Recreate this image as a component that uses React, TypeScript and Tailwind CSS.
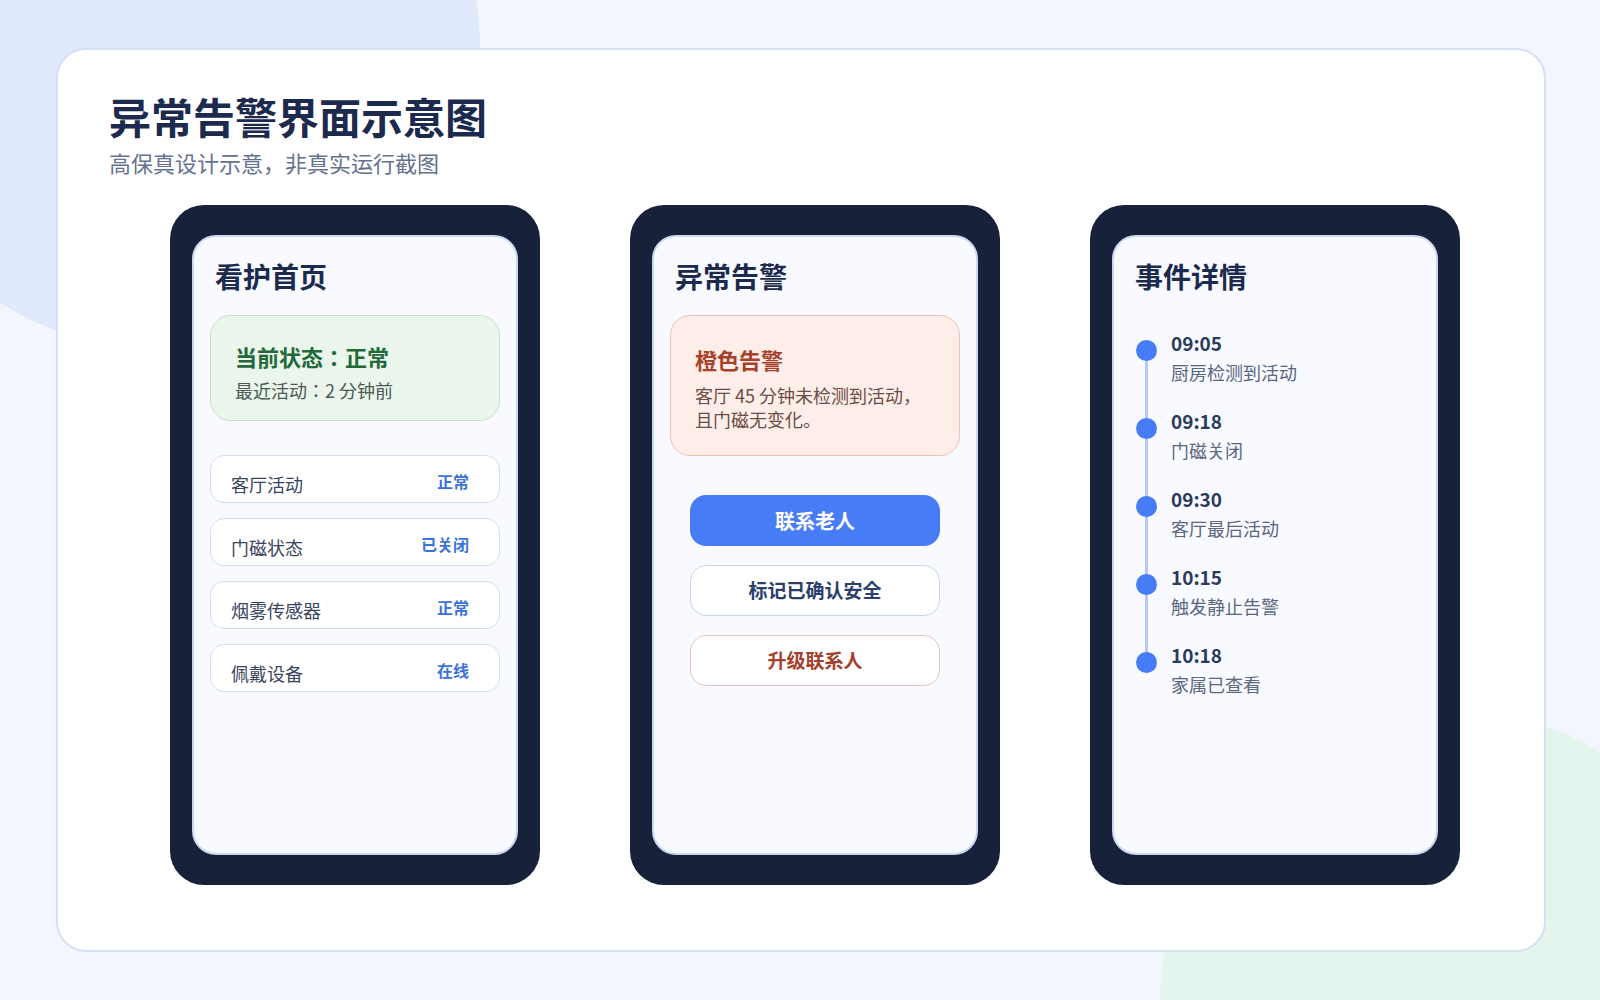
import React from "react";

function Phone({ children }: { children: React.ReactNode }) {
  return (
    <div className="w-[370px] h-[680px] shrink-0 rounded-[34px] bg-[#18213a] px-[22px] py-[30px]">
      <div className="h-full rounded-[24px] border-2 border-[#cad7ef] bg-[#f8faff] px-[16px] pt-[21px]">
        {children}
      </div>
    </div>
  );
}

function ScreenTitle({ text }: { text: string }) {
  return (
    <div className="pl-[5px] text-[28px] leading-[36px] font-bold text-[#1c2a4e]">{text}</div>
  );
}

const rows = [
  { label: "客厅活动", status: "正常" },
  { label: "门磁状态", status: "已关闭" },
  { label: "烟雾传感器", status: "正常" },
  { label: "佩戴设备", status: "在线" },
];

const events = [
  { time: "09:05", text: "厨房检测到活动" },
  { time: "09:18", text: "门磁关闭" },
  { time: "09:30", text: "客厅最后活动" },
  { time: "10:15", text: "触发静止告警" },
  { time: "10:18", text: "家属已查看" },
];

export default function App() {
  return (
    <div className="relative w-[1600px] h-[1000px] overflow-hidden bg-[#f3f6fd] pl-[56px] pt-[48px] font-['Noto_Sans_CJK_JP','Noto_Sans_CJK_SC',sans-serif]">
      <div className="absolute left-[-140px] top-[-255px] w-[620px] h-[605px] rounded-full bg-[#dfe9fb]" />
      <div className="absolute left-[1160px] top-[710px] w-[580px] h-[580px] rounded-full bg-[#e4f5ee]" />

      <div className="relative w-[1490px] h-[904px] rounded-[30px] border-2 border-[#d5e0f3] bg-white pl-[51px] pt-[42px]">
        <div className="text-[42px] leading-[48px] font-bold text-[#1c2a4e]">异常告警界面示意图</div>
        <div className="mt-[7px] text-[22px] leading-[30px] text-[#64728f]">高保真设计示意，非真实运行截图</div>

        <div className="mt-[28px] ml-[61px] flex gap-[90px]">
          {/* Phone 1 */}
          <Phone>
            <ScreenTitle text="看护首页" />
            <div className="mt-[21px] rounded-[20px] border border-[#c6e4c9] bg-[#eaf5ec] px-[24px] pt-[25px] pb-[18px]">
              <div className="text-[22px] leading-[30px] font-bold text-[#23693a]">当前状态：正常</div>
              <div className="mt-[7px] text-[18px] leading-[24px] text-[#4b5a52]">最近活动：2 分钟前</div>
            </div>
            <div className="mt-[34px] flex flex-col gap-[15px]">
              {rows.map((r) => (
                <div
                  key={r.label}
                  className="h-[48px] rounded-[14px] border border-[#d3def1] bg-white pl-[20px] pr-[30px] flex items-center justify-between"
                >
                  <span className="pt-[10px] text-[18px] leading-[24px] text-[#39445e]">{r.label}</span>
                  <span className="pt-[4px] text-[16px] leading-[22px] font-bold text-[#3b73d9]">{r.status}</span>
                </div>
              ))}
            </div>
          </Phone>

          {/* Phone 2 */}
          <Phone>
            <ScreenTitle text="异常告警" />
            <div className="mt-[21px] rounded-[20px] border border-[#f0c1b3] bg-[#fdeee9] px-[24px] pt-[28px] pb-[24px]">
              <div className="text-[22px] leading-[30px] font-bold text-[#a8412b]">橙色告警</div>
              <div className="mt-[9px] text-[18px] leading-[24px] text-[#6c4c43]">
                客厅 45 分钟未检测到活动，
                <br />
                且门磁无变化。
              </div>
            </div>
            <div className="mt-[39px] mx-[20px] flex flex-col gap-[19px]">
              <div className="h-[51px] rounded-[16px] bg-[#477cf7] flex items-center justify-center text-[20px] font-bold text-white">
                联系老人
              </div>
              <div className="h-[51px] rounded-[16px] border border-[#c7d6ef] bg-white flex items-center justify-center text-[19px] font-bold text-[#2b3f6b]">
                标记已确认安全
              </div>
              <div className="h-[51px] rounded-[16px] border border-[#eac4b9] bg-white flex items-center justify-center text-[19px] font-bold text-[#a3412d]">
                升级联系人
              </div>
            </div>
          </Phone>

          {/* Phone 3 */}
          <Phone>
            <ScreenTitle text="事件详情" />
            <div className="relative mt-[37px] pl-[6px] flex flex-col gap-[25px]">
              <div className="absolute left-[15px] top-[19px] w-[3px] h-[312px] bg-[#b8caea]" />
              {events.map((e) => (
                <div key={e.time} className="relative flex">
                  <div className="mt-[9px] w-[21px] h-[21px] shrink-0 rounded-full bg-[#477cf7]" />
                  <div className="ml-[14px]">
                    <div className="text-[19px] leading-[24px] font-bold text-[#2b3a5d]">{e.time}</div>
                    <div className="mt-[5px] text-[18px] leading-[24px] text-[#5b6680]">{e.text}</div>
                  </div>
                </div>
              ))}
            </div>
          </Phone>
        </div>
      </div>
    </div>
  );
}
